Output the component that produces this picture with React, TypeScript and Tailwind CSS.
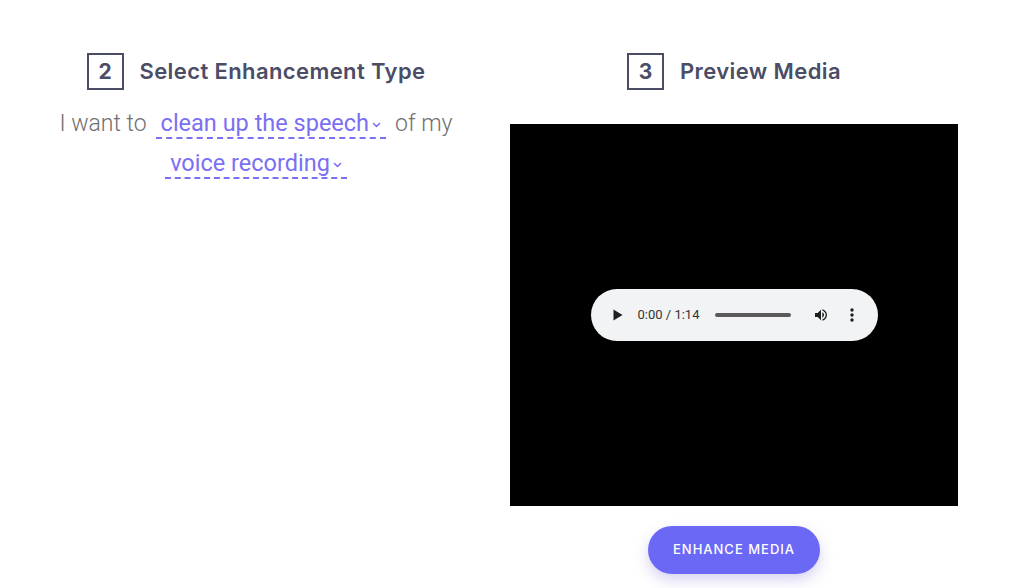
import React from "react";

function Chevron() {
  return (
    <svg width="9" height="6" viewBox="0 0 9 6" className="ml-[3px] mt-[4px]">
      <path d="M1.5 1.5 L4.5 4.5 L7.5 1.5" fill="none" stroke="currentColor" strokeWidth="1.6" strokeLinecap="round" strokeLinejoin="round" />
    </svg>
  );
}

function Picker({ label }: { label: string }) {
  return (
    <span className="inline-flex items-center px-[5px] border-b-2 border-dashed border-[#7b6ff2] text-[#7b6ff2] text-[23.5px] font-normal cursor-pointer leading-[28px]">
      {label}
      <Chevron />
    </span>
  );
}

function StepHeader({ n, title }: { n: number; title: string }) {
  return (
    <div className="flex items-center gap-4">
      <div className="w-[37px] h-[37px] border-2 border-[#4b4d66] flex items-center justify-center text-[21px] font-bold text-[#4b4d66]">
        {n}
      </div>
      <h2 className="text-[22px] font-semibold text-[#4b4d66] tracking-[0.4px]">{title}</h2>
    </div>
  );
}

function AudioBar() {
  return (
    <div className="w-[287px] h-[52px] rounded-full bg-[#f1f3f4] flex items-center pl-[21px] pr-[21px] text-[#1f1f1f]">
      {/* play */}
      <svg width="12" height="12" viewBox="0 0 12 12">
        <path d="M1.5 0.5 L10.5 6 L1.5 11.5 Z" fill="#1f1f1f" />
      </svg>
      <span className="ml-[14px] text-[13px] text-[#333] font-['Roboto',sans-serif]">0:00 / 1:14</span>
      <div className="ml-[16px] w-[76px] h-[4px] rounded-full bg-[#5a5a5a]" />
      {/* volume */}
      <svg width="16" height="16" viewBox="0 0 24 24" className="ml-[22px]">
        <path d="M3 9v6h4l5 5V4L7 9H3z" fill="#1f1f1f" />
        <path d="M16.5 12c0-1.77-1.02-3.29-2.5-4.03v8.05c1.48-.73 2.5-2.25 2.5-4.02z" fill="#1f1f1f" />
        <path d="M14 3.23v2.06c2.89.86 5 3.54 5 6.71s-2.11 5.85-5 6.71v2.06c4.01-.91 7-4.49 7-8.77s-2.99-7.86-7-8.77z" fill="#1f1f1f" />
      </svg>
      <svg width="4" height="16" viewBox="0 0 4 16" className="ml-[21px]">
        <circle cx="2" cy="3" r="1.7" fill="#1f1f1f" />
        <circle cx="2" cy="8" r="1.7" fill="#1f1f1f" />
        <circle cx="2" cy="13" r="1.7" fill="#1f1f1f" />
      </svg>
    </div>
  );
}

export default function App() {
  return (
    <div className="w-[1010px] h-[588px] bg-white overflow-hidden font-['Inter',sans-serif]">
      <div className="flex pt-[53px]">
        {/* Step 2 */}
        <div className="w-[512px] flex flex-col items-center">
          <StepHeader n={2} title="Select Enhancement Type" />
          <div className="mt-[17px] flex flex-col items-center text-[23px] font-light text-[#6f6f6f] font-['Roboto',sans-serif]">
            <div className="flex items-center gap-[9px]">
              <span>I want to</span>
              <Picker label="clean up the speech" />
              <span>of my</span>
            </div>
            <div className="mt-[5px]">
              <Picker label="voice recording" />
            </div>
          </div>
        </div>

        {/* Step 3 */}
        <div className="w-[448px] -ml-[2px] flex flex-col items-center">
          <StepHeader n={3} title="Preview Media" />
          <div className="mt-[34px] w-[448px] h-[382px] bg-black flex items-center justify-center">
            <AudioBar />
          </div>
          <button className="mt-[20px] w-[172px] h-[48px] rounded-full bg-[#6c68f6] text-white text-[13px] font-medium tracking-[1px] uppercase shadow-[0_6px_14px_rgba(90,80,200,0.25)]">
            Enhance Media
          </button>
        </div>
      </div>
    </div>
  );
}
